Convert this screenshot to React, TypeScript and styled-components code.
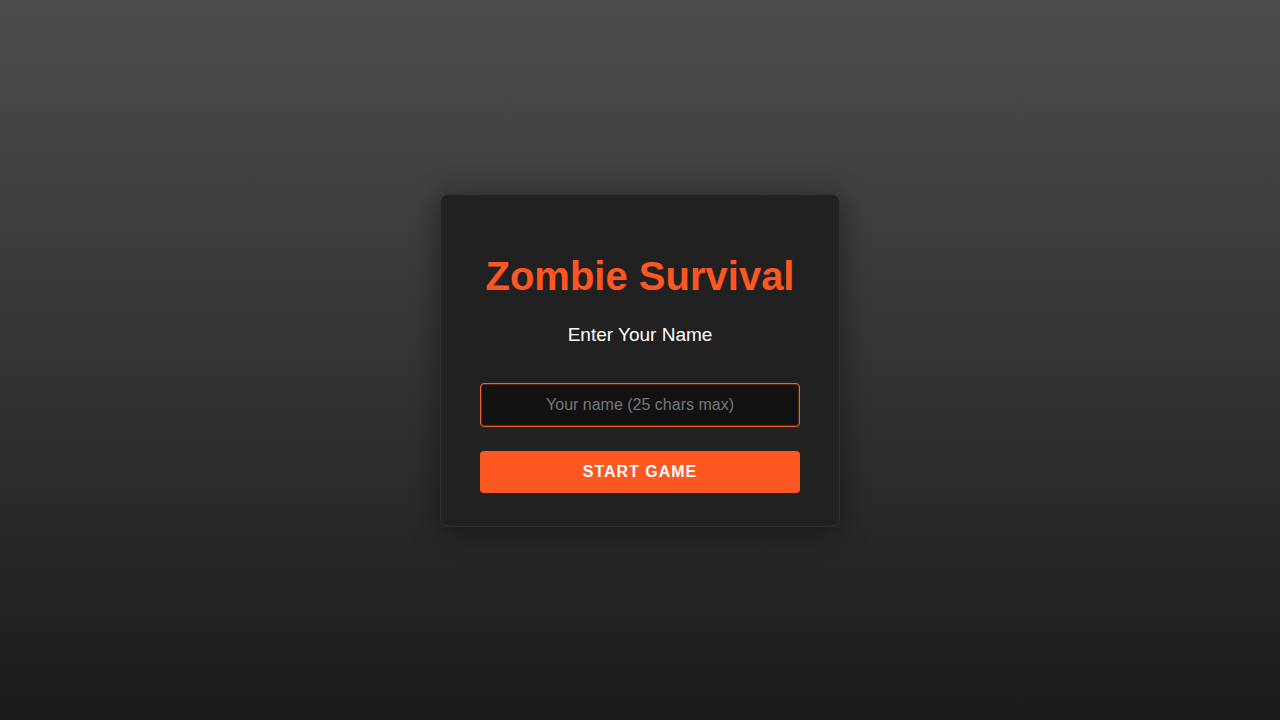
import React, { FC } from "react";
import styled, { createGlobalStyle } from "styled-components";

const GlobalStyle = createGlobalStyle`
  html, body {
    margin: 0;
    padding: 0;
    height: 100%;
  }
  body {
    font-family: "Liberation Sans", Arial, sans-serif;
    background: linear-gradient(to bottom, #4d4d4d 0%, #1b1b1b 100%);
    color: #ffffff;
  }
  #root {
    height: 100%;
  }
`;

const Screen = styled.main`
  display: flex;
  align-items: center;
  justify-content: center;
  width: 100%;
  height: 100vh;
`;

const Card = styled.section`
  box-sizing: border-box;
  width: 400px;
  padding: 30px 39px 33px;
  background: #212121;
  border: 1px solid #333333;
  border-radius: 8px;
  box-shadow: 0 4px 30px rgba(0, 0, 0, 0.45);
  display: flex;
  flex-direction: column;
  align-items: stretch;
  text-align: center;
`;

const Title = styled.h1`
  margin: 28px 0 0;
  font-size: 40px;
  line-height: 46px;
  font-weight: 700;
  color: #ff5722;
`;

const Subtitle = styled.h2`
  margin: 25px 0 0;
  font-size: 19px;
  line-height: 22px;
  font-weight: 400;
  color: #ffffff;
`;

const NameInput = styled.input`
  box-sizing: border-box;
  width: 100%;
  height: 44px;
  margin-top: 37px;
  padding: 0 12px;
  background: #121212;
  border: 1px solid #ea6533;
  box-shadow: inset 0 0 0 1px #5a2212;
  border-radius: 4px;
  color: #ffffff;
  font-family: "Liberation Sans", Arial, sans-serif;
  font-size: 16px;
  text-align: center;
  outline: none;
  &::placeholder {
    color: #777777;
  }
`;

const StartButton = styled.button`
  box-sizing: border-box;
  width: 100%;
  height: 42px;
  margin-top: 24px;
  background: #ff5722;
  border: none;
  border-radius: 4px;
  color: #ffffff;
  font-family: "Liberation Sans", Arial, sans-serif;
  font-size: 16px;
  font-weight: 700;
  letter-spacing: 1px;
  text-transform: uppercase;
  cursor: pointer;
`;

const App: FC = () => {
  return (
    <>
      <GlobalStyle />
      <Screen>
        <Card>
          <Title>Zombie Survival</Title>
          <Subtitle>Enter Your Name</Subtitle>
          <NameInput type="text" maxLength={25} placeholder="Your name (25 chars max)" />
          <StartButton>Start Game</StartButton>
        </Card>
      </Screen>
    </>
  );
};

export default App;
